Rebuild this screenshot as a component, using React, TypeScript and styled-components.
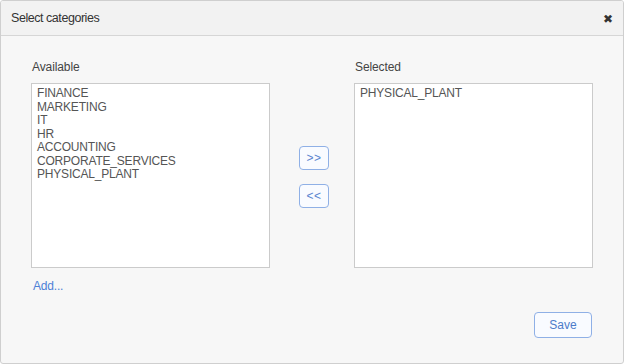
import React, { useState } from 'react';
import styled, { createGlobalStyle } from 'styled-components';

const GlobalStyle = createGlobalStyle`
  html, body {
    margin: 0;
    padding: 0;
    background: #ffffff;
  }
  body {
    font-family: "Liberation Sans", Arial, sans-serif;
  }
`;

const Dialog = styled.div`
  box-sizing: border-box;
  width: 624px;
  height: 364px;
  border: 1px solid #cfcfcf;
  border-radius: 3px;
  background-color: #f7f7f7;
  display: flex;
  flex-direction: column;
  overflow: hidden;
`;

const Header = styled.div`
  display: flex;
  align-items: center;
  justify-content: space-between;
  height: 34px;
  padding: 0 10px 0 10px;
  background-color: #f2f2f2;
  border-bottom: 1px solid #d6d6d6;
`;

const Title = styled.span`
  font-size: 12.5px;
  color: #333;
  letter-spacing: -0.45px;
`;

const CloseButton = styled.span`
  font-size: 12px;
  color: #333;
  cursor: pointer;
  margin-top: 1px;
`;

const Body = styled.div`
  flex: 1;
  display: flex;
  flex-direction: column;
  padding: 24px 30px 25px 30px;
`;

const Columns = styled.div`
  display: flex;
  align-items: stretch;
`;

const Column = styled.div`
  display: flex;
  flex-direction: column;
  width: 239px;
`;

const Label = styled.div`
  font-size: 12px;
  color: #444;
  height: 14px;
  line-height: 14px;
  margin-bottom: 9px;
  padding-left: 1px;
  letter-spacing: -0.1px;
`;

const ListBox = styled.div`
  box-sizing: border-box;
  height: 185px;
  background-color: #fff;
  border: 1px solid #cbcbcb;
  padding: 3px 6px 3px 5px;
`;

const ListItem = styled.div<{ selected?: boolean }>`
  font-size: 12px;
  line-height: 13.5px;
  color: #555;
  letter-spacing: -0.2px;
  cursor: default;
  background-color: ${(p) => (p.selected ? '#e3ecfa' : 'transparent')};
`;

const Middle = styled.div`
  flex: 1;
  display: flex;
  flex-direction: column;
  align-items: center;
  padding-top: 86px;
  padding-left: 4px;
  gap: 14px;
`;

const MoveButton = styled.button`
  box-sizing: border-box;
  width: 30px;
  height: 24px;
  padding: 0;
  border: 1px solid #8fb0e6;
  border-radius: 4px;
  background-color: #f9fbff;
  color: #5a84cf;
  font-family: "Liberation Sans", Arial, sans-serif;
  font-size: 12px;
  letter-spacing: 0.5px;
  cursor: pointer;
`;

const AddLink = styled.a`
  align-self: flex-start;
  margin-top: 11px;
  margin-left: 2px;
  font-size: 12px;
  color: #4d80d6;
  text-decoration: none;
  letter-spacing: -0.2px;
  cursor: pointer;
`;

const Footer = styled.div`
  flex: 1;
  display: flex;
  justify-content: flex-end;
  align-items: flex-end;
`;

const SaveButton = styled.button`
  box-sizing: border-box;
  width: 58px;
  height: 26px;
  margin-right: 1px;
  border: 1px solid #8fb0e6;
  border-radius: 4px;
  background-color: #f9fbff;
  color: #4d7cc9;
  font-family: "Liberation Sans", Arial, sans-serif;
  font-size: 12px;
  cursor: pointer;
`;

const ALL = ['FINANCE', 'MARKETING', 'IT', 'HR', 'ACCOUNTING', 'CORPORATE_SERVICES', 'PHYSICAL_PLANT'];

export default function App() {
  const [available] = useState<string[]>(ALL);
  const [selected] = useState<string[]>(['PHYSICAL_PLANT']);

  return (
    <>
      <GlobalStyle />
      <Dialog>
        <Header>
          <Title>Select categories</Title>
          <CloseButton>✖</CloseButton>
        </Header>
        <Body>
          <Columns>
            <Column>
              <Label>Available</Label>
              <ListBox>
                {available.map((item) => (
                  <ListItem key={item}>{item}</ListItem>
                ))}
              </ListBox>
            </Column>
            <Middle>
              <MoveButton>&gt;&gt;</MoveButton>
              <MoveButton>&lt;&lt;</MoveButton>
            </Middle>
            <Column>
              <Label>Selected</Label>
              <ListBox>
                {selected.map((item) => (
                  <ListItem key={item}>{item}</ListItem>
                ))}
              </ListBox>
            </Column>
          </Columns>
          <AddLink>Add...</AddLink>
          <Footer>
            <SaveButton>Save</SaveButton>
          </Footer>
        </Body>
      </Dialog>
    </>
  );
}
